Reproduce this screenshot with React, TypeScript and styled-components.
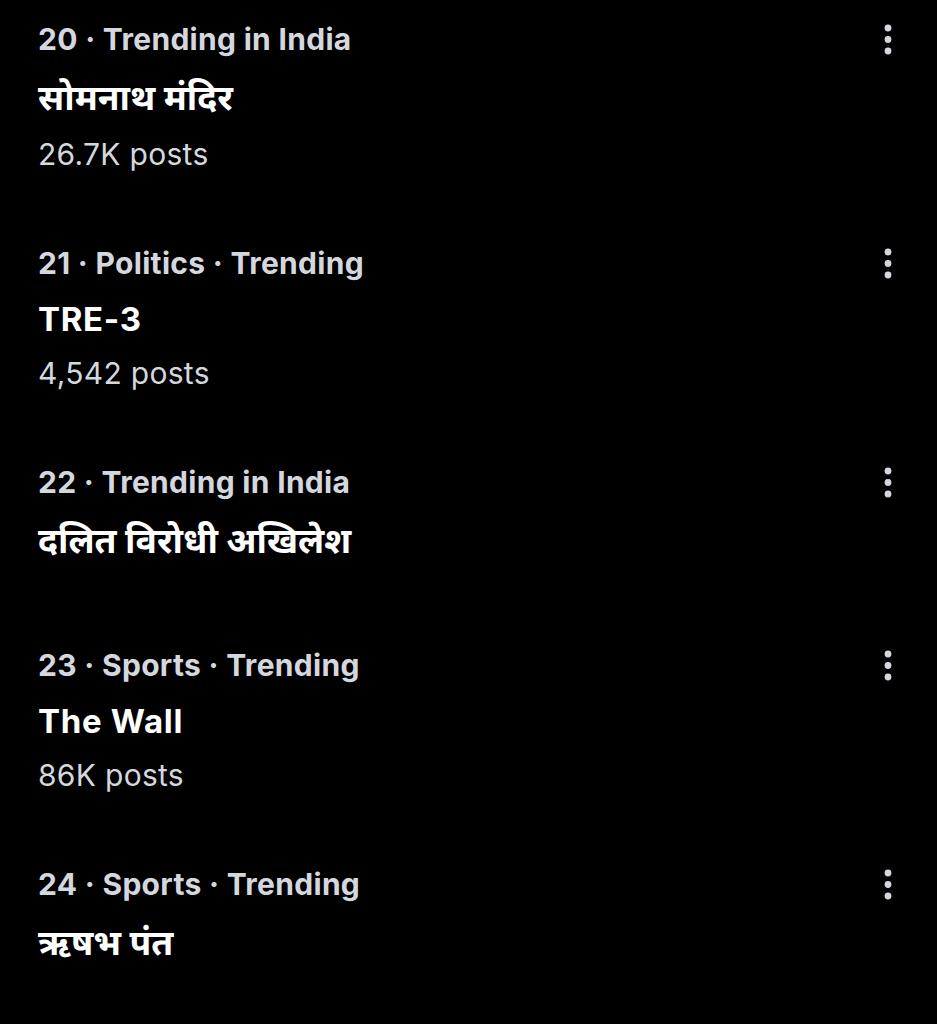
import styled, { createGlobalStyle } from 'styled-components';

const GlobalStyle = createGlobalStyle`
  html, body {
    margin: 0;
    padding: 0;
    background: #000000;
  }
  body {
    font-family: Inter, "Noto Sans", "Noto Sans Devanagari", sans-serif;
    -webkit-font-smoothing: antialiased;
  }
`;

type Trend = {
  rank: number;
  context: string[];
  title: string;
  hindi?: boolean;
  posts?: string;
};

const TRENDS: Trend[] = [
  { rank: 20, context: ['Trending in India'], title: 'सोमनाथ मंदिर', hindi: true, posts: '26.7K posts' },
  { rank: 21, context: ['Politics', 'Trending'], title: 'TRE-3', posts: '4,542 posts' },
  { rank: 22, context: ['Trending in India'], title: 'दलित विरोधी अखिलेश', hindi: true },
  { rank: 23, context: ['Sports', 'Trending'], title: 'The Wall', posts: '86K posts' },
  { rank: 24, context: ['Sports', 'Trending'], title: 'ऋषभ पंत', hindi: true },
];

const MoreIcon = () => (
  <svg width="24" height="36" viewBox="0 0 24 36" fill="#d4d8de">
    <circle cx="12" cy="7" r="3.4" />
    <circle cx="12" cy="18.5" r="3.4" />
    <circle cx="12" cy="30" r="3.4" />
  </svg>
);

export default function App() {
  return (
    <>
      <GlobalStyle />
      <List>
        {TRENDS.map((t) => (
          <Item key={t.rank} $noPosts={!t.posts}>
            <Content>
              <Meta>{[String(t.rank), ...t.context].join(' · ')}</Meta>
              <Title $hindi={!!t.hindi}>{t.title}</Title>
              {t.posts && <Posts>{t.posts}</Posts>}
            </Content>
            <MoreButton aria-label="More">
              <MoreIcon />
            </MoreButton>
          </Item>
        ))}
      </List>
    </>
  );
}

const List = styled.div`
  width: 937px;
  min-height: 1024px;
  background: #000000;
  padding: 19px 0 0 0;
  box-sizing: border-box;
  display: flex;
  flex-direction: column;
  gap: 67px;
`;

const Item = styled.div<{ $noPosts: boolean }>`
  display: flex;
  justify-content: space-between;
  align-items: flex-start;
  padding: 0 37px 0 38px;
  padding-bottom: ${(p) => (p.$noPosts ? '13px' : '0')};
`;

const Content = styled.div`
  display: flex;
  flex-direction: column;
`;

const Meta = styled.div`
  font-size: 30px;
  line-height: 40px;
  font-weight: 700;
  color: #d4d8de;
  letter-spacing: 0.3px;
`;

const Title = styled.div<{ $hindi: boolean }>`
  margin-top: 14px;
  font-size: ${(p) => (p.$hindi ? '35.5px' : '33px')};
  line-height: ${(p) => (p.$hindi ? '49px' : '44px')};
  font-weight: 700;
  color: #ffffff;
  letter-spacing: ${(p) => (p.$hindi ? '0' : '0.7px')};
`;

const Posts = styled.div`
  margin-top: 10px;
  font-size: 30px;
  line-height: 44px;
  font-weight: 400;
  color: #d4d8de;
  letter-spacing: 0.3px;
`;

const MoreButton = styled.button`
  background: none;
  border: none;
  padding: 0;
  margin-top: 2px;
  cursor: pointer;
  display: flex;
`;
